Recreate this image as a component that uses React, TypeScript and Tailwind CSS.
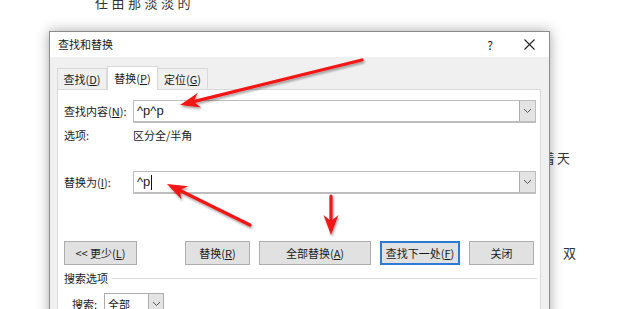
import React from 'react';

type Pt = [number, number];

// red annotation arrow: shaft from tail to the notch, filled head at tip
const Arrow: React.FC<{ from: Pt; to: Pt }> = ({ from, to }) => {
  const dx = to[0] - from[0];
  const dy = to[1] - from[1];
  const len = Math.hypot(dx, dy);
  const ux = dx / len;
  const uy = dy / len;
  const px = -uy;
  const py = ux;
  const head = 20;
  const half = 7.5;
  const bx = to[0] - ux * head;
  const by = to[1] - uy * head;
  const nx = to[0] - ux * (head - 6);
  const ny = to[1] - uy * (head - 6);
  const pts = [
    to,
    [bx + px * half, by + py * half],
    [nx, ny],
    [bx - px * half, by - py * half],
  ]
    .map((p) => p.join(','))
    .join(' ');
  return (
    <g filter="url(#shadow)">
      <line x1={from[0]} y1={from[1]} x2={nx} y2={ny} stroke="#f21515" strokeWidth={3.2} strokeLinecap="round" />
      <polygon points={pts} fill="#f21515" />
    </g>
  );
};

const Chevron: React.FC = () => (
  <svg width="9" height="6" viewBox="0 0 9 6">
    <polyline points="1,1 4.5,4.5 8,1" fill="none" stroke="#555" strokeWidth="1" />
  </svg>
);

const Combo: React.FC<{ value: React.ReactNode }> = ({ value }) => (
  <div className="flex h-[23px] w-[403px] border border-[#bdbdbd] border-b-2 bg-white">
    <div className="flex flex-1 items-center pl-[3px] font-['Liberation_Sans',sans-serif] text-[13px] text-[#222]">
      {value}
    </div>
    <div className="flex w-[16px] items-center justify-center border-l border-[#adadad] bg-[#e3e3e3]">
      <Chevron />
    </div>
  </div>
);

const Btn: React.FC<{ w: string; focus?: boolean; children: React.ReactNode }> = ({ w, focus, children }) => (
  <div
    className={
      focus
        ? `flex h-[24px] ${w} items-center justify-center border-2 border-[#2b7bd6] bg-[#e1e1e1] text-[11px]`
        : `flex h-[24px] ${w} items-center justify-center border border-[#adadad] bg-[#e1e1e1] text-[11px]`
    }
  >
    {children}
  </div>
);

const App: React.FC = () => {
  return (
    <div className="relative h-[309px] w-[620px] overflow-hidden bg-white font-['Microsoft_YaHei','Noto_Sans_CJK_SC',sans-serif] text-[#1a1a1a]">
      {/* document text behind the dialog */}
      <div className="absolute left-[95px] top-[-7px] text-[13px] tracking-[3.5px] text-[#333]">任由那淡淡的</div>
      <div className="absolute left-[542px] top-[148px] text-[13px] tracking-[2px] text-[#333]">着天</div>
      <div className="absolute left-[563px] top-[243px] text-[13px] text-[#333]">双</div>

      {/* dialog window */}
      <div className="absolute left-[49px] top-[31px] h-[300px] w-[501px] border border-[#8c8c8c] bg-[#f0f0f0] shadow-[0_0_12px_rgba(0,0,0,0.35)]">
        <div className="flex h-[25px] items-center bg-white pl-[8px] text-[11px]">
          <span>查找和替换</span>
          <span className="ml-auto w-[30px] text-center text-[12px]">?</span>
          <span className="ml-[9px] mr-[5px] flex w-[30px] justify-center">
            <svg width="11" height="11" viewBox="0 0 11 11">
              <path d="M0.5 0.5 L10.5 10.5 M10.5 0.5 L0.5 10.5" stroke="#222" strokeWidth="1.1" />
            </svg>
          </span>
        </div>

        <div className="pl-[7px] pt-[9px]">
          <div className="flex h-[23px] items-end text-[11px]">
            <div className="flex h-[21px] w-[50px] items-center justify-center border border-b-0 border-[#d9d9d9] bg-[#f0f0f0]">
              查找(<u>D</u>)
            </div>
            <div className="relative z-10 -mb-px flex h-[24px] w-[51px] items-center justify-center border border-b-0 border-[#d9d9d9] bg-white">
              替换(<u>P</u>)
            </div>
            <div className="flex h-[21px] w-[50px] items-center justify-center border border-b-0 border-l-0 border-[#d9d9d9] bg-[#f0f0f0]">
              定位(<u>G</u>)
            </div>
          </div>

          <div className="h-[240px] w-[484px] border border-[#d9d9d9] bg-white pl-[6px] text-[11px]">
            <div className="mt-[10px] flex items-center">
              <span className="w-[69px]">
                查找内容(<u>N</u>):
              </span>
              <Combo value="^p^p" />
            </div>
            <div className="mt-[4px] flex h-[16px] items-center">
              <span className="w-[69px]">选项:</span>
              <span>区分全/半角</span>
            </div>
            <div className="mt-[28px] flex items-center">
              <span className="w-[69px]">
                替换为(<u>I</u>):
              </span>
              <Combo
                value={
                  <>
                    ^p<span className="ml-px inline-block h-[15px] w-px bg-[#111]" />
                  </>
                }
              />
            </div>

            <div className="mt-[47px] flex items-center">
              <Btn w="w-[73px]">
                &lt;&lt; 更少(<u>L</u>)
              </Btn>
              <div className="ml-[48px] flex gap-[9px]">
                <Btn w="w-[65px]">
                  替换(<u>R</u>)
                </Btn>
                <Btn w="w-[112px]">
                  全部替换(<u>A</u>)
                </Btn>
                <Btn w="w-[80px]" focus>
                  查找下一处(<u>F</u>)
                </Btn>
                <Btn w="w-[65px]">关闭</Btn>
              </div>
            </div>

            <div className="mt-[5px] flex h-[16px] items-center pr-[3px]">
              <span>搜索选项</span>
              <div className="ml-[4px] h-px flex-1 bg-[#dcdcdc]" />
            </div>

            <div className="mt-[7px] flex items-center pl-[8px]">
              <span className="w-[32px]">搜索:</span>
              <div className="flex h-[22px] w-[60px] border border-[#adadad] bg-white">
                <span className="flex-1 pl-[3px] leading-[20px]">全部</span>
                <div className="flex w-[15px] items-center justify-center border-l border-[#adadad] bg-[#e3e3e3]">
                  <Chevron />
                </div>
              </div>
            </div>
          </div>
        </div>
      </div>

      {/* annotation arrows */}
      <svg className="pointer-events-none absolute left-0 top-0" width="620" height="309">
        <defs>
          <filter id="shadow" x="-20%" y="-20%" width="140%" height="140%">
            <feDropShadow dx="1" dy="2" stdDeviation="1.2" floodColor="#000" floodOpacity="0.35" />
          </filter>
        </defs>
        <Arrow from={[362, 60]} to={[180, 105]} />
        <Arrow from={[250, 225]} to={[167, 184]} />
        <Arrow from={[331, 196]} to={[331, 235]} />
      </svg>
    </div>
  );
};

export default App;
